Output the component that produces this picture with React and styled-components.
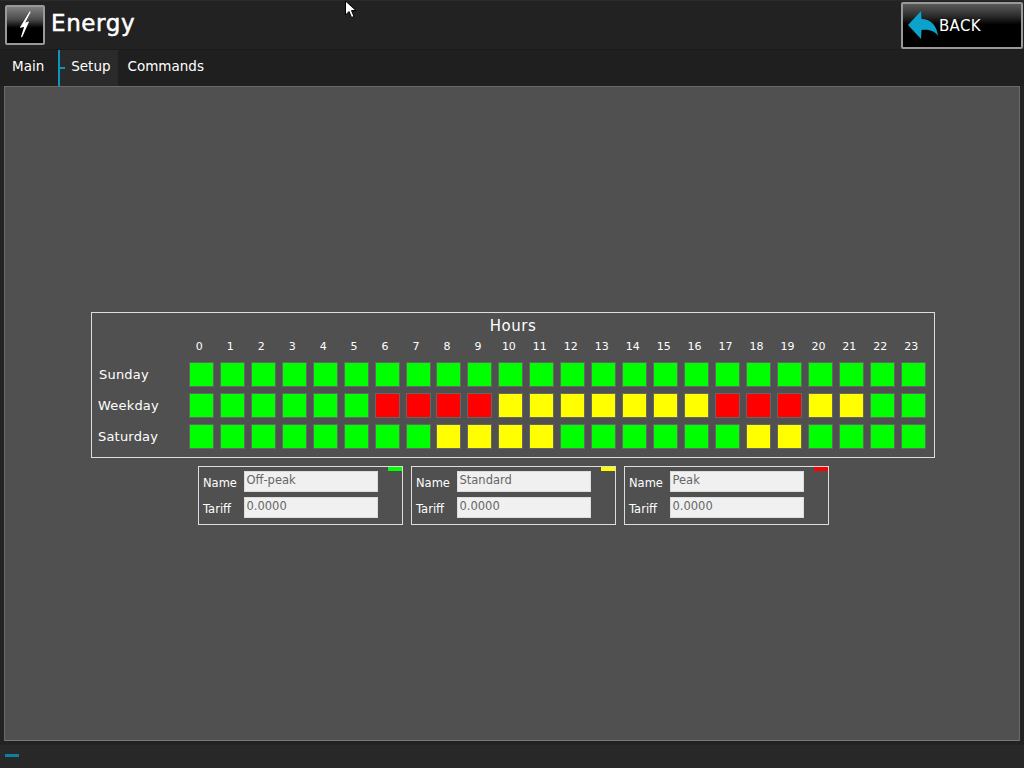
import React from "react";
import styled, { createGlobalStyle } from "styled-components";

const Global = createGlobalStyle`
  html, body { margin: 0; padding: 0; background: #232323; }
  body { font-family: "DejaVu Sans", "Noto Sans", sans-serif; color: #fff; overflow: hidden; }
  * { box-sizing: border-box; }
`;

const Page = styled.div`
  width: 1024px; height: 768px; display: flex; flex-direction: column; position: relative; background: #232323; overflow: hidden;
`;
const Header = styled.header`
  height: 50px; display: flex; align-items: center; justify-content: space-between;
  padding: 0 1px 0 5px; background: #222222; border-top: 1px solid #2a2a2a; border-bottom: 1px solid #1c1c1c;
`;
const TitleGroup = styled.div`display: flex; align-items: center; gap: 6px;`;
const IconButton = styled.div`
  width: 40px; height: 40px; border: 2px solid #999; border-radius: 2px;
  background: linear-gradient(#808080 0%, #4a4a4a 35%, #000 58%, #000 100%);
  display: flex; align-items: center; justify-content: center;
`;
const Bolt = styled.svg`width: 36px; height: 36px; flex: none; display: block;`;
const Title = styled.h1`
  margin: 0; font-size: 23px; font-weight: 400; letter-spacing: 0.6px; -webkit-text-stroke: 0.5px #fff; line-height: 1; position: relative; top: -2px;
`;
const BackButton = styled.div`
  width: 122px; height: 47px; border: 2px solid #999; border-radius: 2px; display: flex; align-items: center; padding-left: 5px;
  background: linear-gradient(#5a5a5a 0%, #2c2c2c 28%, #000 48%, #000 100%);
  font-size: 15px; letter-spacing: 0.3px;
`;
const BackLabel = styled.span`padding-top: 1px;`;
const Tabs = styled.nav`height: 36px; display: flex; background: #1f1f1f;`;
const Tab = styled.div`
  height: 36px; display: flex; align-items: center; font-size: 13.5px; position: relative; padding-bottom: 4px;
  padding-left: ${p => p.$l}px; padding-right: ${p => p.$r}px;
  background: ${p => (p.$active ? "#2a2a2a" : "transparent")};
  border-left: ${p => (p.$active ? "2px solid #0d95bb" : "0")};
  ${p => p.$active && `&::before { content: ""; position: absolute; left: 0; top: 17px; width: 5px; height: 2px; background: #0d95bb; }`}
`;
const Panel = styled.main`
  width: 1016px; height: 655px; margin: 0 4px; background: #505050; border: 1px solid #6a6a6a; border-bottom-color: #777;
  display: flex; flex-direction: column; align-items: center; padding-top: 225px;
`;
const HoursBox = styled.section`
  width: 844px; height: 146px; border: 1px solid #ddd; padding-top: 5px; position: relative; left: 1px;
`;
const HoursTitle = styled.div`text-align: center; font-size: 15px; line-height: 17px; letter-spacing: 0.5px;`;
const Grid = styled.div`
  display: grid; grid-template-columns: 90.9px repeat(24, 25px); column-gap: 5.96px; row-gap: 6px; grid-auto-rows: 25px;
`;
const HourLabel = styled.div`text-align: center; font-size: 11px; line-height: 18px; height: 18px; position: relative; left: -2px;`;
const HeaderRow = styled.div`
  display: grid; grid-template-columns: 90.9px repeat(24, 25px); column-gap: 5.96px; height: 18px; margin: 3px 0 6px;
`;
const Corner = styled.div``;
const DayLabel = styled.div`
  font-size: 13px; line-height: 26px; padding-left: ${p => p.$pad}px; letter-spacing: 0.2px; white-space: nowrap;
`;
const colors = { g: "#00ff00", y: "#ffff00", r: "#ff0000" };
const Cell = styled.div`background: ${p => colors[p.$c]}; border: 1px solid #666;`;
const Tariffs = styled.div`display: flex; gap: 8px; margin-top: 8px; position: relative; left: 1px;`;
const Card = styled.div`
  width: 205px; height: 59px; border: 1px solid #ddd; position: relative;
  display: flex; flex-direction: column; gap: 5px; padding: 4px 0 0 4px;
`;
const Tag = styled.div`
  position: absolute; top: 0; right: 0; width: 14px; height: 4px; background: ${p => colors[p.$c]};
`;
const Row = styled.div`display: flex; align-items: center; height: 21px;`;
const FieldLabel = styled.span`font-size: 11.5px; width: 41px; padding-left: 0.5px; position: relative; top: 1px;`;
const Input = styled.div`
  width: 134px; height: 21px; background: #f0f0f0; border: 1px solid #ddd; color: #666; font-size: 11.5px; line-height: 17px; padding-left: 2px;
`;
const Footer = styled.footer`flex: 1; padding: 9px 0 0 5px; background: #282828; border-top: 4px solid #222;`;
const Progress = styled.div`width: 14px; height: 3px; background: #0f7fa0;`;
const Cursor = styled.svg`position: absolute; left: 344px; top: 0; width: 13px; height: 20px;`;

const hours = Array.from({ length: 24 }, (_, i) => i);
const rows = [
  { name: "Sunday", pad: 7, c: "gggggggggggggggggggggggg" },
  { name: "Weekday", pad: 6, c: "ggggggrrrryyyyyyyrrryygg" },
  { name: "Saturday", pad: 6, c: "ggggggggyyyyggggggyygggg" },
];
const tariffs = [
  { name: "Off-peak", c: "g" },
  { name: "Standard", c: "y" },
  { name: "Peak", c: "r" },
];

export default function App() {
  return (
    <Page>
      <Global />
      <Header>
        <TitleGroup>
          <IconButton>
            <Bolt viewBox="7 7 36 36">
              <path d="M30 12 L20.7 27.3 L25 26 L21.7 36.7 L28.3 22 L24 23.8 Z" fill="#fff" stroke="#fff" strokeWidth="1.2" strokeLinejoin="round" />
            </Bolt>
          </IconButton>
          <Title>Energy</Title>
        </TitleGroup>
        <BackButton>
          <svg width="31" height="29" viewBox="0 0 31 29">
            <path d="M13 0 L0 14 L13 28 L13.5 19 C21 18 27 20 30 25 C29 15 23 8 13.5 8 Z" fill="#0ba3cc" />
          </svg>
          <BackLabel>BACK</BackLabel>
        </BackButton>
      </Header>
      <Tabs>
        <Tab $l={12} $r={14}>Main</Tab>
        <Tab $active $l={11} $r={7}>Setup</Tab>
        <Tab $l={10} $r={0}>Commands</Tab>
      </Tabs>
      <Panel>
        <HoursBox>
          <HoursTitle>Hours</HoursTitle>
          <HeaderRow>
            <Corner />
            {hours.map(h => <HourLabel key={h}>{h}</HourLabel>)}
          </HeaderRow>
          <Grid>
            {rows.map(r => (
              <React.Fragment key={r.name}>
                <DayLabel $pad={r.pad}>{r.name}</DayLabel>
                {r.c.split("").map((c, i) => <Cell key={i} $c={c} />)}
              </React.Fragment>
            ))}
          </Grid>
        </HoursBox>
        <Tariffs>
          {tariffs.map(t => (
            <Card key={t.name}>
              <Tag $c={t.c} />
              <Row><FieldLabel>Name</FieldLabel><Input>{t.name}</Input></Row>
              <Row><FieldLabel>Tariff</FieldLabel><Input>0.0000</Input></Row>
            </Card>
          ))}
        </Tariffs>
      </Panel>
      <Footer><Progress /></Footer>
      <Cursor viewBox="0 0 13 20">
        <path d="M1.5 1 L1.5 15 L5 11.5 L7.5 17.5 L10 16.5 L7.5 10.5 L12 10.5 Z" fill="#fff" stroke="#000" strokeWidth="1" />
      </Cursor>
    </Page>
  );
}
